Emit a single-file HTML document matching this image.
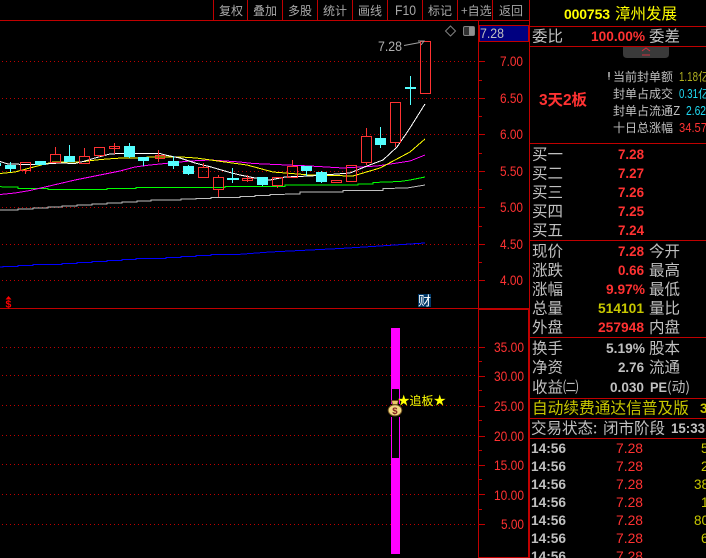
<!DOCTYPE html>
<html><head><meta charset="utf-8"><style>
html,body{margin:0;padding:0;background:#000;width:706px;height:558px;overflow:hidden}
svg{display:block}
text{font-family:"Liberation Sans","WenQuanYi Zen Hei","Noto Sans CJK SC",sans-serif}
.c{font-family:"WenQuanYi Zen Hei","Noto Sans CJK SC",sans-serif;font-size:15.5px;fill:#c0c0c0}
.t{font-family:"WenQuanYi Zen Hei","Noto Sans CJK SC",sans-serif;font-size:12px;fill:#a8a8a8}
.s{font-family:"WenQuanYi Zen Hei","Noto Sans CJK SC",sans-serif;font-size:12px;fill:#c0c0c0}
.a{font-size:14px;fill:#ff3232}
.b{font-size:13.5px;font-weight:bold;fill:#ff3232}
.g{font-size:13.5px;font-weight:bold;fill:#c0c0c0}
.y{font-size:13.5px;font-weight:bold;fill:#c8c800}
.r{stroke:#ff3232;fill:none;shape-rendering:crispEdges}
.w{stroke:#ff3232;shape-rendering:crispEdges}
.u{stroke:#54ffff;shape-rendering:crispEdges}
.f{fill:#54ffff}
.l{fill:none;stroke-width:1;shape-rendering:crispEdges}
.d{stroke:#c00000;stroke-dasharray:1 3;shape-rendering:crispEdges}
.p{stroke:#c00000;shape-rendering:crispEdges}
</style></head><body>
<svg width="706" height="558" viewBox="0 0 706 558" xmlns="http://www.w3.org/2000/svg">
<rect width="706" height="558" fill="#000"/>
<!-- grid -->
<g class="d">
<path d="M2 61.5H478M2 98.5H478M2 134.5H478M2 171.5H478M2 207.5H478M2 244.5H478M2 280.5H478"/>
<path d="M2 347.5H478M2 375.5H478M2 405.5H478M2 435.5H478M2 464.5H478M2 494.5H478M2 524.5H478"/>
</g>
<!-- frame lines -->
<g class="p">
<path d="M0 20.5H529M213.5 0V20M247.5 0V20M282.5 0V20M317.5 0V20M352.5 0V20M387.5 0V20M422.5 0V20M457.5 0V20M492.5 0V20"/>
<path d="M478.5 20V558M0 308.5H529M479 309.5H529M479 557.5H529M528.5 309V558M529.5 0V558"/>
<path d="M529 26.5H706M529 46.5H706M529 143.5H706M529 240.5H706M529 337.5H706M529 398.5H706M529 418.5H706M529 438.5H706"/>
<path d="M478 61.5H485M478 98.5H485M478 134.5H485M478 171.5H485M478 207.5H485M478 244.5H485M478 280.5H485M478 80.5H482M478 116.5H482M478 153.5H482M478 189.5H482M478 226.5H482M478 262.5H482"/>
<path d="M479 347.5H485M479 376.5H485M479 406.5H485M479 436.5H485M479 465.5H485M479 494.5H485M479 524.5H485M479 361.5H482M479 390.5H482M479 420.5H482M479 450.5H482M479 479.5H482M479 509.5H482"/>
</g>
<!-- toolbar -->
<text class="t" x="219" y="15">复权</text>
<text class="t" x="253" y="15">叠加</text>
<text class="t" x="288" y="15">多股</text>
<text class="t" x="323" y="15">统计</text>
<text class="t" x="358" y="15">画线</text>
<text x="395" y="15" font-size="13.5" fill="#a8a8a8" textLength="21" lengthAdjust="spacingAndGlyphs">F10</text>
<text class="t" x="428" y="15">标记</text>
<text class="t" x="461" y="15">+自选</text>
<text class="t" x="499" y="15">返回</text>
<!-- MA lines -->
<polyline class="l" stroke="#c0c0c0" points="0,210 18,210 18,209 33,209 33,208 48,208 48,207 62,207 62,206 77,206 77,205 92,205 92,204 107,204 107,203 122,203 122,202 137,202 137,201 151,201 151,200 181,200 181,199 196,199 196,198.5 211,198.5 211,197.5 240,197.5 240,196.7 255,196.7 255,195.7 270,195.7 270,194.5 300,194 300,192 343,192 343,190.5 383,190.5 383,188.5 407,188 425,185"/>
<polyline class="l" stroke="#00ff00" points="0,186.5 3,187 18,187 18,188.5 48,188.5 48,189.5 107,189.5 107,188.5 136,188.5 136,187.5 225,187.5 225,186.5 285,186.5 285,185.2 358,185.2 358,184 373,184 373,182.5 400,181.5 410,180 425,177"/>
<polyline class="l" stroke="#0000ff" points="0,267 3,267 3,266.3 18,266.3 18,265.3 33,265.3 33,264.3 62,264.3 62,263.3 77,263.3 77,262.3 92,262.3 92,261.3 107,261.3 107,260.3 122,260.3 122,259.3 136,259.3 136,258.3 166,258.3 166,257.3 181,257.3 181,256.3 196,256.3 196,255.3 211,255.3 211,254.3 240,254.3 270,252 300,250.5 340,248.5 380,246 425,243"/>
<polyline class="l" stroke="#ff00ff" points="0,194.5 15,193 30,190.5 45,187 60,183.5 75,180 90,177 105,174 120,171 135,167 150,165 170,163 190,161 210,160 240,162 253,163.5 310,166 343,168 377,166 397,163 410,161 425,155"/>
<polyline class="l" stroke="#ffff00" points="0,173.5 15,172 30,168 45,164 53,162 80,162 96,160 107,159 122,158 137,158 150,157 166,157 181,157 196,158 211,160 225,162 247,165 273,172 310,175 353,176 380,168 395,160 410,152 425,139"/>
<polyline class="l" stroke="#ffffff" points="0,161.5 8,164 30,164.5 45,164 60,163 75,163.5 85,161 95,158 110,154 120,153.5 160,153.5 165,155 180,158 195,163 210,166.7 230,172.5 240,175 255,178 270,180 285,177 310,176 350,173 367,166 383,160 397,147 410,128 425,104"/>
<!-- candles -->
<g class="f">
<rect x="0" y="163" width="1" height="3"/>
<rect x="5" y="165" width="11" height="4"/>
<rect x="35" y="161" width="11" height="4"/>
<rect x="64" y="156" width="11" height="6"/>
<rect x="124" y="146" width="11" height="11"/>
<rect x="138" y="157" width="11" height="4"/>
<rect x="168" y="161" width="11" height="5"/>
<rect x="183" y="166" width="11" height="8"/>
<rect x="227" y="178" width="12" height="2"/>
<rect x="257" y="177" width="11" height="8"/>
<rect x="301" y="166" width="11" height="5"/>
<rect x="316" y="172" width="11" height="10"/>
<rect x="375" y="138" width="11" height="7"/>
<rect x="405" y="87" width="11" height="2"/>
</g>
<path class="u" d="M10.5 162V172M69.5 145V156M129.5 143V158M143.5 161V166M173.5 156V169M188.5 165V175M232.5 168V183M262.5 185V186M306.5 171V176M321.5 171V183M380.5 127V148M410.5 76V105"/>
<path class="w" d="M25.5 171V174M55.5 147V154M84.5 148V156M99.5 155V157M114.5 143V154M158.5 150V162M203.5 163V167M218.5 175V177M218.5 189V197M247.5 175V182M277.5 185V188M292.5 160V166M366.5 128V136M366.5 162V165M395.5 143V147"/>
<g class="r">
<rect x="20.5" y="162.5" width="10" height="8"/>
<rect x="50.5" y="154.5" width="10" height="8"/>
<rect x="79.5" y="156.5" width="10" height="7"/>
<rect x="94.5" y="147.5" width="10" height="8"/>
<rect x="109.5" y="146.5" width="10" height="2"/>
<rect x="155.5" y="155.5" width="9" height="3"/>
<rect x="198.5" y="167.5" width="10" height="10"/>
<rect x="213.5" y="177.5" width="10" height="12"/>
<rect x="242.5" y="178.5" width="10" height="2"/>
<rect x="272.5" y="177.5" width="10" height="8"/>
<rect x="287.5" y="166.5" width="10" height="11"/>
<rect x="331.5" y="180.5" width="10" height="2"/>
<rect x="346.5" y="165.5" width="10" height="16"/>
<rect x="361.5" y="136.5" width="10" height="26"/>
<rect x="390.5" y="102.5" width="10" height="40"/>
<rect x="420.5" y="41.5" width="10" height="52"/>
</g>
<!-- price annotation -->
<text x="378" y="51" font-size="13.5" fill="#b0b0b0" textLength="24" lengthAdjust="spacingAndGlyphs">7.28</text>
<path d="M404 45.5L420 42.5M418 41H424L421 45" stroke="#a0a0a0" fill="none"/>
<path d="M450.5 26L455.5 31L450.5 36L445.5 31Z" fill="none" stroke="#808080"/>
<rect x="463.5" y="26.5" width="11" height="9" rx="1.5" fill="#303030" stroke="#808080"/>
<rect x="469" y="27" width="5" height="8" fill="#909090"/>
<!-- axis -->
<rect x="479.5" y="25.5" width="49" height="16" fill="#000080" stroke="#c00000"/>
<text x="480" y="38" font-size="13.5" fill="#c0c0c0" textLength="24" lengthAdjust="spacingAndGlyphs">7.28</text>
<g class="a">
<text x="500" y="66" textLength="23" lengthAdjust="spacingAndGlyphs">7.00</text>
<text x="500" y="103" textLength="23" lengthAdjust="spacingAndGlyphs">6.50</text>
<text x="500" y="139" textLength="23" lengthAdjust="spacingAndGlyphs">6.00</text>
<text x="500" y="176" textLength="23" lengthAdjust="spacingAndGlyphs">5.50</text>
<text x="500" y="212" textLength="23" lengthAdjust="spacingAndGlyphs">5.00</text>
<text x="500" y="249" textLength="23" lengthAdjust="spacingAndGlyphs">4.50</text>
<text x="500" y="285" textLength="23" lengthAdjust="spacingAndGlyphs">4.00</text>
<text x="494" y="352" textLength="30" lengthAdjust="spacingAndGlyphs">35.00</text>
<text x="494" y="381" textLength="30" lengthAdjust="spacingAndGlyphs">30.00</text>
<text x="494" y="411" textLength="30" lengthAdjust="spacingAndGlyphs">25.00</text>
<text x="494" y="441" textLength="30" lengthAdjust="spacingAndGlyphs">20.00</text>
<text x="494" y="470" textLength="30" lengthAdjust="spacingAndGlyphs">15.00</text>
<text x="494" y="500" textLength="30" lengthAdjust="spacingAndGlyphs">10.00</text>
<text x="501" y="529" textLength="23" lengthAdjust="spacingAndGlyphs">5.00</text>
</g>
<!-- markers -->
<path d="M8.5 296L11.5 299.5H5.5Z" fill="#ff0000"/>
<text x="5.5" y="307.5" font-size="10.5" font-weight="bold" fill="#ff0000">$</text>
<rect x="418" y="294" width="13" height="13" fill="#003868"/>
<text x="418" y="305.5" font-size="13" fill="#ffffff" style="font-family:'WenQuanYi Zen Hei','Noto Sans CJK SC',sans-serif">财</text>
<!-- lower bar -->
<rect x="391" y="328" width="9" height="226" fill="#ff00ff"/>
<rect x="391.5" y="388.5" width="8" height="70" fill="#000" stroke="#ff00ff" shape-rendering="crispEdges"/>
<path d="M391 404H400V417H391Z" fill="#000"/>
<text x="397" y="405.5" font-size="15" fill="#ffff00" style="font-family:'DejaVu Sans',sans-serif">★</text>
<text x="409.5" y="405" font-size="12" fill="#ffff00" style="font-family:'WenQuanYi Zen Hei','Noto Sans CJK SC',sans-serif">追板</text>
<text x="433" y="405.5" font-size="15" fill="#ffff00" style="font-family:'DejaVu Sans',sans-serif">★</text>
<path d="M391.5 400.5H398.5L397.5 404.5H392.5Z" fill="#e8c868" stroke="#604010" stroke-width=".8"/>
<ellipse cx="395" cy="410.3" rx="6.8" ry="5.6" fill="#f0d880" stroke="#705020"/>
<text x="392.2" y="414" font-size="9.5" font-weight="bold" fill="#802020">$</text>
<!-- right panel header -->
<text x="564" y="19" font-size="14" font-weight="bold" fill="#ffff00" textLength="46" lengthAdjust="spacing">000753</text>
<text x="615" y="19" font-size="15.5" fill="#ffff00" style="font-family:'WenQuanYi Zen Hei','Noto Sans CJK SC',sans-serif">漳州发展</text>
<text class="c" x="532" y="41.5">委比</text>
<text class="b" x="591" y="41" textLength="54" lengthAdjust="spacingAndGlyphs">100.00%</text>
<text class="c" x="649" y="41.5">委差</text>
<path d="M623 47H669V54Q669 58 665 58H627Q623 58 623 54Z" fill="#3a3a3a"/>
<path d="M642 51L646 48L650 51M642 55H650" stroke="#d03040" fill="none"/>
<text x="539" y="105" font-size="15.5" font-weight="bold" fill="#ff3232" style="font-family:'Liberation Sans','Noto Sans CJK SC',sans-serif" textLength="48">3天2板</text>
<path d="M608 72H610V77H609.5V80H608.5V77H608Z" fill="#909090"/>
<text class="s" x="613" y="81">当前封单额</text>
<text class="s" x="613" y="98">封单占成交</text>
<text class="s" x="613" y="115">封单占流通Z</text>
<text class="s" x="613" y="132">十日总涨幅</text>
<text x="679" y="81" font-size="13" fill="#b0b020" textLength="19" lengthAdjust="spacingAndGlyphs">1.18</text><text x="698" y="81" font-size="12" fill="#b0b020">亿</text>
<text x="679" y="98" font-size="13" fill="#20d8f0" textLength="19" lengthAdjust="spacingAndGlyphs">0.31</text><text x="698" y="98" font-size="12" fill="#20d8f0">亿</text>
<text x="686" y="115" font-size="13" fill="#20d8f0" textLength="20" lengthAdjust="spacingAndGlyphs">2.62</text>
<text x="679" y="132" font-size="13" fill="#ff3232" textLength="28" lengthAdjust="spacingAndGlyphs">34.57</text>
<!-- bid -->
<text class="c" x="532" y="159.5">买一</text><text class="b" x="618" y="159" textLength="26" lengthAdjust="spacingAndGlyphs">7.28</text>
<text class="c" x="532" y="178.5">买二</text><text class="b" x="618" y="178" textLength="26" lengthAdjust="spacingAndGlyphs">7.27</text>
<text class="c" x="532" y="197.5">买三</text><text class="b" x="618" y="197" textLength="26" lengthAdjust="spacingAndGlyphs">7.26</text>
<text class="c" x="532" y="216.5">买四</text><text class="b" x="618" y="216" textLength="26" lengthAdjust="spacingAndGlyphs">7.25</text>
<text class="c" x="532" y="235.5">买五</text><text class="b" x="618" y="235" textLength="26" lengthAdjust="spacingAndGlyphs">7.24</text>
<!-- quote -->
<text class="c" x="532" y="256.5">现价</text><text class="b" x="618" y="256" textLength="26" lengthAdjust="spacingAndGlyphs">7.28</text><text class="c" x="649" y="256.5">今开</text>
<text class="c" x="532" y="275.5">涨跌</text><text class="b" x="618" y="275" textLength="26" lengthAdjust="spacingAndGlyphs">0.66</text><text class="c" x="649" y="275.5">最高</text>
<text class="c" x="532" y="294.5">涨幅</text><text class="b" x="606" y="294" textLength="39" lengthAdjust="spacingAndGlyphs">9.97%</text><text class="c" x="649" y="294.5">最低</text>
<text class="c" x="532" y="313.5">总量</text><text class="y" x="598" y="313" textLength="46" lengthAdjust="spacingAndGlyphs">514101</text><text class="c" x="649" y="313.5">量比</text>
<text class="c" x="532" y="332.5">外盘</text><text class="b" x="598" y="332" textLength="46" lengthAdjust="spacingAndGlyphs">257948</text><text class="c" x="649" y="332.5">内盘</text>
<text class="c" x="532" y="353.5">换手</text><text class="g" x="606" y="353" textLength="39" lengthAdjust="spacingAndGlyphs">5.19%</text><text class="c" x="649" y="353.5">股本</text>
<text class="c" x="532" y="372.5">净资</text><text class="g" x="618" y="372" textLength="26" lengthAdjust="spacingAndGlyphs">2.76</text><text class="c" x="649" y="372.5">流通</text>
<text class="c" x="532" y="392.5">收益㈡</text><text class="g" x="610" y="392" textLength="34" lengthAdjust="spacingAndGlyphs">0.030</text><text class="g" x="650" y="392" textLength="17" lengthAdjust="spacingAndGlyphs">PE</text><text class="c" x="667" y="392" style="font-size:14px" textLength="23" lengthAdjust="spacingAndGlyphs">(动)</text>
<!-- banner -->
<text x="532" y="413.5" font-size="15.7" fill="#c8c800" style="font-family:'WenQuanYi Zen Hei','Noto Sans CJK SC',sans-serif">自动续费通达信普及版</text>
<text class="y" x="700" y="413">3</text>
<text class="c" x="531" y="433.5">交易状态:</text>
<text class="c" x="603" y="433.5">闭市阶段</text>
<text class="g" x="671" y="433" textLength="34" lengthAdjust="spacingAndGlyphs">15:33</text>
<!-- ticks -->
<g>
<text class="g" x="531" y="453" textLength="35" lengthAdjust="spacingAndGlyphs">14:56</text><text x="616" y="453" font-size="13.5" fill="#ff3232" textLength="27" lengthAdjust="spacingAndGlyphs">7.28</text><text x="701" y="453" font-size="13.5" fill="#c8c800">5</text>
<text class="g" x="531" y="471" textLength="35" lengthAdjust="spacingAndGlyphs">14:56</text><text x="616" y="471" font-size="13.5" fill="#ff3232" textLength="27" lengthAdjust="spacingAndGlyphs">7.28</text><text x="701" y="471" font-size="13.5" fill="#c8c800">2</text>
<text class="g" x="531" y="489" textLength="35" lengthAdjust="spacingAndGlyphs">14:56</text><text x="616" y="489" font-size="13.5" fill="#ff3232" textLength="27" lengthAdjust="spacingAndGlyphs">7.28</text><text x="694" y="489" font-size="13.5" fill="#c8c800">38</text>
<text class="g" x="531" y="507" textLength="35" lengthAdjust="spacingAndGlyphs">14:56</text><text x="616" y="507" font-size="13.5" fill="#ff3232" textLength="27" lengthAdjust="spacingAndGlyphs">7.28</text><text x="701" y="507" font-size="13.5" fill="#c8c800">1</text>
<text class="g" x="531" y="525" textLength="35" lengthAdjust="spacingAndGlyphs">14:56</text><text x="616" y="525" font-size="13.5" fill="#ff3232" textLength="27" lengthAdjust="spacingAndGlyphs">7.28</text><text x="694" y="525" font-size="13.5" fill="#c8c800">80</text>
<text class="g" x="531" y="543" textLength="35" lengthAdjust="spacingAndGlyphs">14:56</text><text x="616" y="543" font-size="13.5" fill="#ff3232" textLength="27" lengthAdjust="spacingAndGlyphs">7.28</text><text x="701" y="543" font-size="13.5" fill="#c8c800">6</text>
<text class="g" x="531" y="561" textLength="35" lengthAdjust="spacingAndGlyphs">14:56</text><text x="616" y="561" font-size="13.5" fill="#ff3232" textLength="27" lengthAdjust="spacingAndGlyphs">7.28</text>
</g>
</svg>
</body></html>
